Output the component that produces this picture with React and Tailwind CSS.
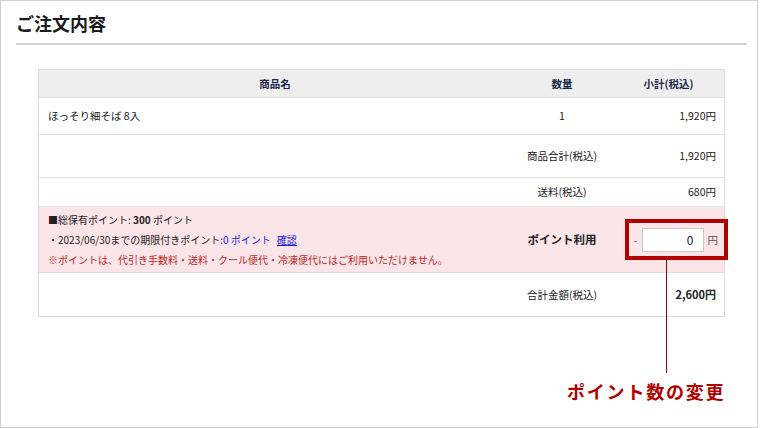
import React from 'react'

const FONT = { fontFamily: '"Noto Sans CJK JP", "Noto Sans", sans-serif' }

function Cell({ className = '', children }) {
  return <div className={`flex items-center ${className}`}>{children}</div>
}

export default function App() {
  return (
    <div style={FONT} className="relative w-[758px] h-[428px] border border-[#cfcfcf] bg-white text-[#222]">
      {/* heading */}
      <div className="ml-[15px] mr-[10px] pt-[10px] pb-[8px] border-b-2 border-[#d0d0d0]">
        <h1 className="text-[18px] leading-[24px] font-bold text-[#1a1a1a]">ご注文内容</h1>
      </div>

      {/* order table */}
      <div className="ml-[37px] mt-[24px] w-[687px] border border-[#dcdcdc] text-[10.5px]">
        <div className="grid grid-cols-[472px_102px_1fr] h-[27px] bg-[#eeeeee] font-bold text-[#1b2a4a]">
          <Cell className="justify-center">商品名</Cell>
          <Cell className="justify-center">数量</Cell>
          <Cell className="justify-center">小計(税込)</Cell>
        </div>
        <div className="grid grid-cols-[472px_102px_1fr] h-[37px] border-t border-[#dcdcdc]">
          <Cell className="pl-[9px]">ほっそり細そば 8入</Cell>
          <Cell className="justify-center">1</Cell>
          <Cell className="justify-end pr-[8px]">1,920円</Cell>
        </div>
        <div className="grid grid-cols-[472px_102px_1fr] h-[43px] border-t border-[#dcdcdc]">
          <Cell />
          <Cell className="justify-center">商品合計(税込)</Cell>
          <Cell className="justify-end pr-[8px]">1,920円</Cell>
        </div>
        <div className="grid grid-cols-[472px_102px_1fr] h-[29px] border-t border-[#e4e4e4]">
          <Cell />
          <Cell className="justify-center">送料(税込)</Cell>
          <Cell className="justify-end pr-[8px]">680円</Cell>
        </div>
        <div className="grid grid-cols-[472px_102px_1fr] h-[66px] border-t border-[#e4e4e4] bg-[#fce5e8]">
          <div className="flex flex-col justify-center pl-[9px] leading-[20px] text-[10px]">
            <p>■総保有ポイント: <span className="font-bold">300</span> ポイント</p>
            <p>
              ・2023/06/30までの期限付きポイント:<span className="text-[#1a1ae6]">0 ポイント</span>
              <a href="#" className="ml-[6px] text-[#1a1ae6] underline">確認</a>
            </p>
            <p className="text-[#c01f25]">※ポイントは、代引き手数料・送料・クール便代・冷凍便代にはご利用いただけません。</p>
          </div>
          <Cell className="justify-center text-[11.5px] font-bold">ポイント利用</Cell>
          <Cell className="justify-end pr-[6px] gap-[4px]">
            <span className="text-[#555]">-</span>
            <div className="w-[62px] h-[24px] border border-[#c8c8c8] bg-white flex items-center justify-end pr-[9px] text-[12px]">0</div>
            <span className="text-[#555]">円</span>
          </Cell>
        </div>
        <div className="grid grid-cols-[472px_102px_1fr] h-[44px] border-t border-[#dcdcdc]">
          <Cell />
          <Cell className="justify-center">合計金額(税込)</Cell>
          <Cell className="justify-end pr-[8px] font-bold text-[11px]">2,600円</Cell>
        </div>
      </div>

      {/* annotation */}
      <div className="absolute left-[624px] top-[218px] w-[103px] h-[41px] border-4 border-[#b00000]" />
      <div className="absolute left-[665px] top-[259px] w-[1px] h-[113px] bg-[#990000]" />
      <div className="absolute left-[566px] top-[378px] text-[18px] leading-[24px] font-bold tracking-[1.8px] text-[#b00000]">
        ポイント数の変更
      </div>
    </div>
  )
}
